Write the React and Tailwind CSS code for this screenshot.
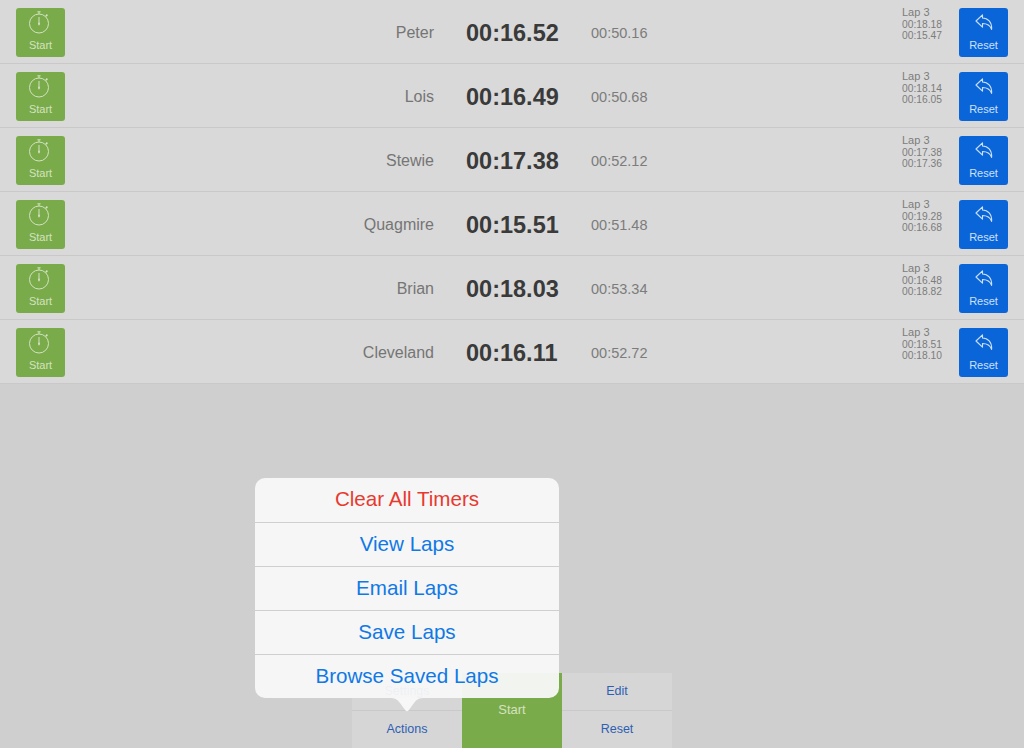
import { useState } from 'react';

const timers = [
  { name: 'Peter', time: '00:16.52', total: '00:50.16', lapA: '00:18.18', lapB: '00:15.47' },
  { name: 'Lois', time: '00:16.49', total: '00:50.68', lapA: '00:18.14', lapB: '00:16.05' },
  { name: 'Stewie', time: '00:17.38', total: '00:52.12', lapA: '00:17.38', lapB: '00:17.36' },
  { name: 'Quagmire', time: '00:15.51', total: '00:51.48', lapA: '00:19.28', lapB: '00:16.68' },
  { name: 'Brian', time: '00:18.03', total: '00:53.34', lapA: '00:16.48', lapB: '00:18.82' },
  { name: 'Cleveland', time: '00:16.11', total: '00:52.72', lapA: '00:18.51', lapB: '00:18.10' },
];

const actions = ['View Laps', 'Email Laps', 'Save Laps', 'Browse Saved Laps'];

function StopwatchIcon() {
  return (
    <svg className="mr-[3px]" width="22" height="23" viewBox="0 0 22 23" fill="none" stroke="#d3e2c0" strokeWidth="1">
      <circle cx="11" cy="12.5" r="9.5" />
      <path d="M11 0.8V3M9.4 0.8h3.2" />
      <path d="M17.8 5.2l1.6-1.6" strokeWidth="1.6" />
      <path d="M11 6v8" />
      <path d="M9.9 11.8L11 15L12.1 11.8Z" fill="#d3e2c0" stroke="none" />
    </svg>
  );
}

function ResetIcon() {
  return (
    <svg width="18" height="16" viewBox="0 0 18 16" fill="none" stroke="#cfe0f7" strokeWidth="1.1" strokeLinejoin="round">
      <path d="M1 7L7.5 0.8V4C12.5 4 17.2 8 16.6 15.4C15.2 11.5 12 9.5 7.5 9.5V13.2Z" />
    </svg>
  );
}

function TimerRow({ timer }) {
  return (
    <div className="flex h-16 items-start border-b border-[#c9c9c9] bg-[#d9d9d9] pl-4 pt-2">
      <button className="flex h-[49px] w-[49px] flex-col items-center rounded-[3px] bg-[#7aab4a] pt-[3px] text-[11px] leading-[13px] text-[#d3e2c0]">
        <StopwatchIcon />
        <span className="mt-[5px]">Start</span>
      </button>
      <div className="mt-[16px] w-[369px] text-right text-base leading-[18px] text-[#757575]">{timer.name}</div>
      <div className="ml-[32px] mt-[9px] w-[125px] text-[23.5px] font-bold leading-[32px] text-[#3a3a3a]">{timer.time}</div>
      <div className="mt-[17px] w-[311px] text-[14.5px] leading-4 text-[#7c7c7c]">{timer.total}</div>
      <div className="w-[57px] text-[#7c7c7c]">
        <div className="-mt-[2px] text-[11px] leading-[13px]">Lap 3</div>
        <div className="mt-[1px] text-[10.25px] leading-[10.5px]">{timer.lapA}</div>
        <div className="text-[10.25px] leading-[10.5px]">{timer.lapB}</div>
      </div>
      <button className="flex h-[49px] w-[49px] flex-col items-center rounded-[3px] bg-[#0a66d8] pt-[6px] text-[11px] leading-[13px] text-[#cfe0f7]">
        <ResetIcon />
        <span className="mt-[9px]">Reset</span>
      </button>
    </div>
  );
}

export default function App() {
  const [open] = useState(true);

  return (
    <div className="relative flex h-[748px] w-[1024px] flex-col overflow-hidden bg-[#cfcfcf] font-['Liberation_Sans',Arial,sans-serif]">
      {timers.map((timer) => (
        <TimerRow key={timer.name} timer={timer} />
      ))}

      <div className="mx-auto mt-auto flex h-[75px] w-[320px] bg-[#d6d6d6] text-[12.5px] text-[#2f5fb3]">
        <div className="flex w-[110px] flex-col">
          <div className="flex h-[38px] items-center justify-center border-b border-[#c9c9c9]">Settings</div>
          <div className="flex flex-1 items-center justify-center">Actions</div>
        </div>
        <div className="flex w-[100px] items-center justify-center bg-[#7aab4a] pb-[2px] text-[13px] text-[#d3e2c0]">Start</div>
        <div className="flex w-[110px] flex-col">
          <div className="flex h-[38px] items-center justify-center border-b border-[#c9c9c9]">Edit</div>
          <div className="flex flex-1 items-center justify-center">Reset</div>
        </div>
      </div>

      {open && (
        <div className="absolute left-[255px] top-[478px] w-[304px]">
          <div className="overflow-hidden rounded-[10px] bg-[#f8f8f8]/95 text-[20.6px]">
            <div className="flex h-[44px] items-center justify-center pb-[1px] text-[#e8392f]">Clear All Timers</div>
            {actions.map((label) => (
              <div key={label} className="flex h-[44px] items-center justify-center border-t border-[#cfcfcf] pb-[1px] text-[#1079e6]">
                {label}
              </div>
            ))}
          </div>
          <svg className="absolute left-[134px] top-[220px]" width="36" height="14" viewBox="0 0 36 14">
            <path d="M0 0C6 0 8 1 11 5L16.5 12.5Q18 14 19.5 12.5L25 5C28 1 30 0 36 0Z" fill="#f7f7f7" />
          </svg>
        </div>
      )}
    </div>
  );
}
